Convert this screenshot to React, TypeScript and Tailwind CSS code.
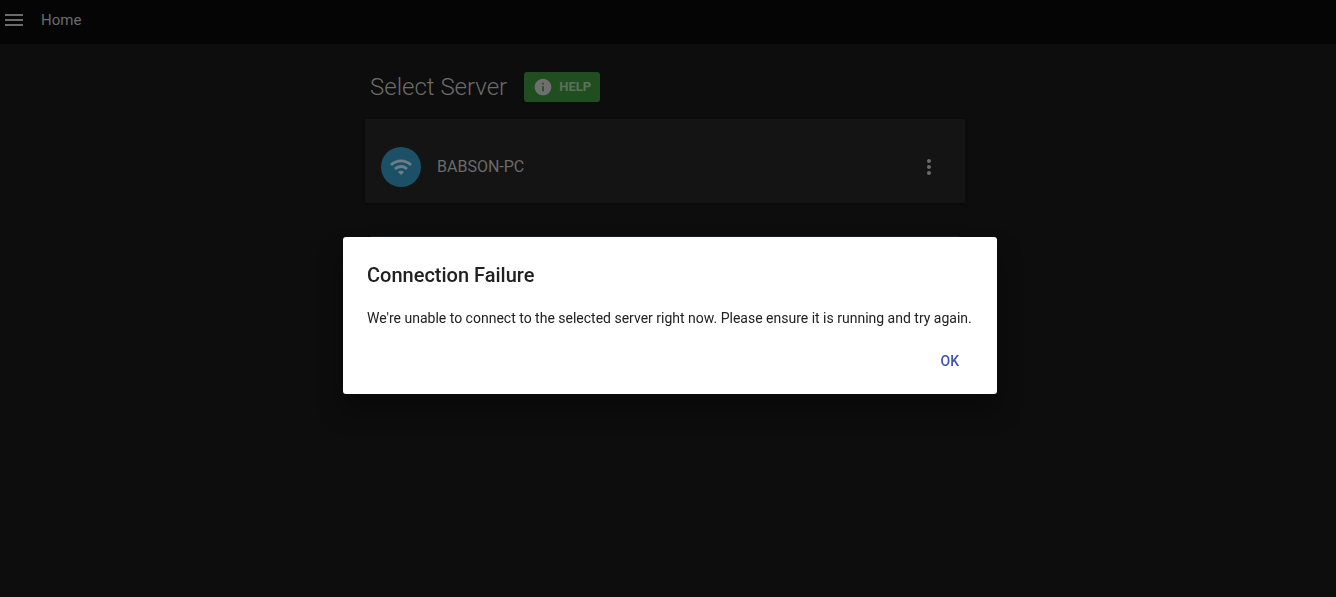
import React from "react";

function MenuIcon() {
  return (
    <svg viewBox="0 0 24 24" className="size-6 fill-current" aria-hidden="true">
      <path d="M3 18h18v-2H3v2zm0-5h18v-2H3v2zm0-7v2h18V6H3z" />
    </svg>
  );
}

function InfoIcon() {
  return (
    <svg viewBox="0 0 24 24" className="size-5 fill-current" aria-hidden="true">
      <path d="M12 2C6.480 2 2 6.480 2 12s4.480 10 10 10 10-4.480 10-10S17.520 2 12 2zm1 15h-2v-6h2v6zm0-8h-2V7h2v2z" />
    </svg>
  );
}

function WifiIcon() {
  return (
    <svg viewBox="0 0 24 24" className="size-6 fill-current" aria-hidden="true">
      <path d="M1 9l2 2c4.970-4.970 13.030-4.970 18 0l2-2C16.930 2.930 7.080 2.930 1 9zm8 8l3 3 3-3c-1.650-1.660-4.340-1.660-6 0zm-4-4l2 2c2.760-2.760 7.240-2.760 10 0l2-2C15.140 9.140 8.870 9.140 5 13z" />
    </svg>
  );
}

function MoreIcon() {
  return (
    <svg viewBox="0 0 24 24" className="size-6 fill-current" aria-hidden="true">
      <path d="M12 8c1.100 0 2-.9 2-2s-.9-2-2-2-2 .9-2 2 .9 2 2 2zm0 2c-1.100 0-2 .9-2 2s.9 2 2 2 2-.9 2-2-.9-2-2-2zm0 6c-1.100 0-2 .9-2 2s.9 2 2 2 2-.9 2-2-.9-2-2-2z" />
    </svg>
  );
}

export default function App() {
  return (
    <div className="min-h-screen bg-[#0d0d0d] font-['Roboto',sans-serif] text-[#6b6b6b]">
      <header className="flex h-11 items-center gap-[15px] bg-[#050505] px-0.5 pb-1">
        <button type="button" aria-label="Menu">
          <MenuIcon />
        </button>
        <h1 className="text-[15px] leading-5 font-normal">Home</h1>
      </header>

      <main className="px-4 pt-7 pr-[22px]">
        <div className="mx-auto max-w-[600px]">
          <div className="flex items-center gap-[17px] pl-[5px]">
            <h2 className="text-2xl leading-[30px] font-light">Select Server</h2>
            <button
              type="button"
              className="flex h-[30px] items-center gap-1.5 rounded-[3px] bg-[#214e20] px-[9px] text-[13px] font-bold text-[#5b725a]"
            >
              <span className="text-[#6f6f6f]">
                <InfoIcon />
              </span>
              HELP
            </button>
          </div>

          <section className="mt-[17px] flex h-[84px] items-center gap-4 bg-[#141414] px-4 pt-3 shadow-[0_1px_2px_#090909]">
            <div className="flex size-10 items-center justify-center rounded-full bg-[#1c5066] text-[#6b7f88]">
              <WifiIcon />
            </div>
            <h3 className="flex-1 text-base font-normal">BABSON-PC</h3>
            <button type="button" aria-label="Server options" className="mr-2">
              <MoreIcon />
            </button>
          </section>

          <div className="mx-[5px] mt-[33px] h-10 rounded-xs bg-[#14232f]" />
        </div>
      </main>

      <div className="fixed inset-0 flex items-center justify-center pt-[34px] pl-1">
        <div
          role="alertdialog"
          aria-modal="true"
          aria-labelledby="dialog-title"
          aria-describedby="dialog-message"
          className="min-w-[654px] rounded-[3px] bg-white p-6 pb-4 text-[#212121] shadow-[0_16px_24px_2px_rgba(0,0,0,0.3)]"
        >
          <h2 id="dialog-title" className="text-xl leading-7 font-medium">
            Connection Failure
          </h2>
          <p id="dialog-message" className="mt-[19px] text-sm leading-5">
            We're unable to connect to the selected server right now. Please ensure it is running and try again.
          </p>
          <div className="mt-4 flex justify-end">
            <button type="button" className="h-[34px] px-[14px] text-sm font-medium text-[#3f51b5]">
              OK
            </button>
          </div>
        </div>
      </div>
    </div>
  );
}
